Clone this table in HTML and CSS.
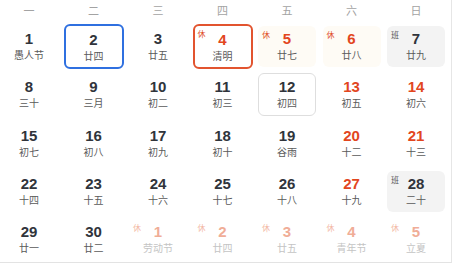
FILE: index.html
```html
<!DOCTYPE html>
<html lang="zh-CN">
<head>
<meta charset="utf-8">
<title>日历</title>
<link rel="stylesheet" href="styles.css">
</head>
<body>
<div class="cal">
  <div class="week">
    <span>一</span><span>二</span><span>三</span><span>四</span><span>五</span><span>六</span><span>日</span>
  </div>
  <div class="days">
    <div class="day"><b>1</b><i>愚人节</i></div>
    <div class="day today"><b>2</b><i>廿四</i></div>
    <div class="day"><b>3</b><i>廿五</i></div>
    <div class="day holiday picked"><em>休</em><b>4</b><i>清明</i></div>
    <div class="day holiday rest"><em>休</em><b>5</b><i>廿七</i></div>
    <div class="day holiday rest"><em>休</em><b>6</b><i>廿八</i></div>
    <div class="day work"><em>班</em><b>7</b><i>廿九</i></div>

    <div class="day"><b>8</b><i>三十</i></div>
    <div class="day"><b>9</b><i>三月</i></div>
    <div class="day"><b>10</b><i>初二</i></div>
    <div class="day"><b>11</b><i>初三</i></div>
    <div class="day hover"><b>12</b><i>初四</i></div>
    <div class="day weekend"><b>13</b><i>初五</i></div>
    <div class="day weekend"><b>14</b><i>初六</i></div>

    <div class="day"><b>15</b><i>初七</i></div>
    <div class="day"><b>16</b><i>初八</i></div>
    <div class="day"><b>17</b><i>初九</i></div>
    <div class="day"><b>18</b><i>初十</i></div>
    <div class="day"><b>19</b><i>谷雨</i></div>
    <div class="day weekend"><b>20</b><i>十二</i></div>
    <div class="day weekend"><b>21</b><i>十三</i></div>

    <div class="day"><b>22</b><i>十四</i></div>
    <div class="day"><b>23</b><i>十五</i></div>
    <div class="day"><b>24</b><i>十六</i></div>
    <div class="day"><b>25</b><i>十七</i></div>
    <div class="day"><b>26</b><i>十八</i></div>
    <div class="day weekend"><b>27</b><i>十九</i></div>
    <div class="day work"><em>班</em><b>28</b><i>二十</i></div>

    <div class="day"><b>29</b><i>廿一</i></div>
    <div class="day"><b>30</b><i>廿二</i></div>
    <div class="day next"><em>休</em><b>1</b><i>劳动节</i></div>
    <div class="day next"><em>休</em><b>2</b><i>廿四</i></div>
    <div class="day next"><em>休</em><b>3</b><i>廿五</i></div>
    <div class="day next"><em>休</em><b>4</b><i>青年节</i></div>
    <div class="day next"><em>休</em><b>5</b><i>立夏</i></div>
  </div>
</div>
</body>
</html>
```
FILE: styles.css
```css
html, body {
  margin: 0;
  padding: 0;
  background: #fff;
}
body {
  font-family: "Liberation Sans", "Noto Sans CJK SC", sans-serif;
}
.cal {
  width: 452px;
  height: 263px;
  box-sizing: border-box;
  border-right: 1px solid #e6e6e6;
  border-bottom: 1px solid #e3e3e3;
}
.week {
  display: grid;
  grid-template-columns: repeat(7, 58px);
  column-gap: 6.5px;
  height: 20px;
}
.week span {
  text-align: center;
  font-family: "Noto Sans CJK SC", sans-serif;
  font-size: 11px;
  line-height: 20px;
  color: #a3a3a3;
}
.days {
  display: grid;
  grid-template-columns: repeat(7, 58px);
  grid-auto-rows: 41px;
  column-gap: 6.5px;
  row-gap: 7.33px;
  margin-top: 6px;
}
.day {
  position: relative;
  display: flex;
  flex-direction: column;
  align-items: center;
  padding-top: 4px;
  box-sizing: border-box;
  border-radius: 6px;
}
.day b {
  font-family: "Liberation Sans", sans-serif;
  font-weight: bold;
  font-size: 15px;
  line-height: 17px;
  color: #30343b;
}
.day i {
  font-style: normal;
  font-family: "Noto Sans CJK SC", sans-serif;
  font-size: 10px;
  line-height: 13px;
  margin-top: 1px;
  color: #5a5a5a;
}
.day em {
  position: absolute;
  left: 4px;
  top: 4px;
  font-style: normal;
  font-family: "Noto Sans CJK SC", sans-serif;
  font-size: 8px;
  line-height: 10px;
  color: #e0502a;
}
.holiday b,
.weekend b {
  color: #e2461e;
}
.rest {
  background: #fefbf5;
}
.work {
  background: #f3f3f3;
}
.work em {
  color: #555;
}
.today {
  margin: -2px -1px;
  padding-top: 5px;
  border: 2px solid #2f70e0;
}
.picked {
  margin: -2px -1px;
  padding-top: 5px;
  border: 2px solid #e2542f;
}
.picked em {
  left: 3px;
  top: 3px;
}
.hover {
  margin: -1px 0;
  padding-top: 4px;
  border: 1px solid #dedede;
}
.next b {
  color: #f0ad97;
}
.next i {
  color: #c4c4c4;
}
.next em {
  color: #f3b9a6;
}
```
